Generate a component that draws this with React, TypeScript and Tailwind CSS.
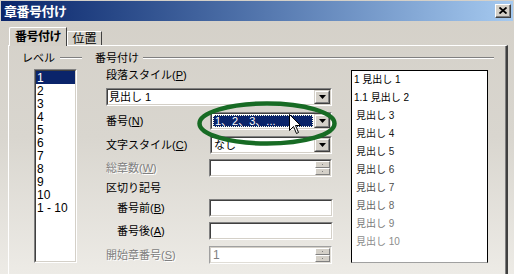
import React from "react";

function Sunken({
  children,
  className = "",
  light = false,
}: {
  children?: React.ReactNode;
  className?: string;
  light?: boolean;
}) {
  return (
    <div
      className={
        (light
          ? "border border-t-[#a0a0a0] border-l-[#a0a0a0] border-r-white border-b-white "
          : "border border-t-[#808080] border-l-[#808080] border-r-white border-b-white ") + className
      }
    >
      <div
        className={
          light
            ? "h-full flex items-stretch bg-white border border-t-[#d4d0c8] border-l-[#d4d0c8] border-r-[#e0ddd6] border-b-[#e0ddd6]"
            : "h-full flex items-stretch bg-white border border-t-[#404040] border-l-[#404040] border-r-[#d4d0c8] border-b-[#d4d0c8]"
        }
      >
        {children}
      </div>
    </div>
  );
}

function DropButton() {
  return (
    <div className="w-[16px] h-full shrink-0 border border-t-[#d4d0c8] border-l-[#d4d0c8] border-r-[#404040] border-b-[#404040]">
      <div className="w-full h-full bg-[#d4d0c8] border border-t-white border-l-white border-r-[#808080] border-b-[#808080] flex items-center justify-center">
        <svg width="7" height="4" viewBox="0 0 7 4">
          <path d="M0 0H7L3.5 4Z" fill="#000" />
        </svg>
      </div>
    </div>
  );
}

function SpinButtons() {
  return (
    <div className="w-[15px] h-full shrink-0 flex flex-col">
      <div className="flex-1 bg-[#d4d0c8] border border-t-white border-l-white border-r-[#808080] border-b-[#808080] flex items-center justify-center">
        <div className="w-[1px] h-[1px] bg-[#808080]" />
      </div>
      <div className="flex-1 bg-[#d4d0c8] border border-t-white border-l-white border-r-[#808080] border-b-[#808080] flex items-center justify-center">
        <div className="w-[1px] h-[1px] bg-[#808080]" />
      </div>
    </div>
  );
}

const disabledText = "text-[#808080] [text-shadow:1px_1px_0_#ffffff]";

export default function App() {
  const levels = ["1", "2", "3", "4", "5", "6", "7", "8", "9", "10", "1 - 10"];
  const preview = [
    { t: "1 見出し 1", c: "text-black", p: "pl-[2px]" },
    { t: "1.1 見出し 2", c: "text-black", p: "pl-[2px]" },
    { t: "見出し 3", c: "text-[#111111]", p: "pl-[4px]" },
    { t: "見出し 4", c: "text-[#1a1a1a]", p: "pl-[4px]" },
    { t: "見出し 5", c: "text-[#222222]", p: "pl-[4px]" },
    { t: "見出し 6", c: "text-[#333333]", p: "pl-[4px]" },
    { t: "見出し 7", c: "text-[#4a4a4a]", p: "pl-[4px]" },
    { t: "見出し 8", c: "text-[#666666]", p: "pl-[4px]" },
    { t: "見出し 9", c: "text-[#7c7c7c]", p: "pl-[4px]" },
    { t: "見出し 10", c: "text-[#8c8c8c]", p: "pl-[4px]" },
  ];

  return (
    <div className="relative w-[514px] h-[274px] overflow-hidden bg-linear-to-b from-[#d4d0c8] via-[#d9d6cf] to-[#edebe6] font-['Liberation_Sans','Noto_Sans_CJK_JP',sans-serif] text-[11px] text-black leading-none">
      {/* Title bar */}
      <div className="mt-[1px] mx-[1px] h-[20px] flex items-center justify-between bg-linear-to-r from-[#0a246a] to-[#a6caf0] pl-[3px] pr-[2px]">
        <span className="text-white font-bold text-[13px] tracking-[-0.5px]">章番号付け</span>
        <div className="w-[16px] h-[14px] border border-t-white border-l-white border-r-[#404040] border-b-[#404040]">
          <div className="w-full h-full bg-[#d4d0c8] border-r border-b border-[#808080] flex items-center justify-center">
            <svg width="8" height="7" viewBox="0 0 8 7">
              <path d="M0.5 0.5L7.5 6.5M7.5 0.5L0.5 6.5" stroke="#000" strokeWidth="1.8" />
            </svg>
          </div>
        </div>
      </div>

      {/* Body */}
      <div className="flex flex-col pl-[8px] pr-[6px] pt-[6px] h-[253px]">
        {/* Tabs */}
        <div className="flex items-start h-[18px] ml-[1px]">
          <div className="relative z-10 h-[19px] w-[58px] bg-[#d4d0c8] border-t border-l border-white border-r border-r-[#404040] rounded-tl-[2px] flex items-center justify-center">
            <span className="font-bold text-[12px] tracking-[-0.5px]">番号付け</span>
          </div>
          <div className="mt-[4px] h-[14px] w-[35px] border-t border-l border-white border-r border-r-[#404040] flex items-center justify-center">
            <span className="text-[12px]">位置</span>
          </div>
        </div>

        {/* Panel */}
        <div className="flex-1 border-t border-l border-white border-r-2 border-r-[#404040]">
          <div className="h-full border-r border-r-[#808080] pt-[5px] pl-[13px] flex">
            {/* Level fieldset */}
            <div className="w-[60px] flex flex-col">
              <div className="flex items-center h-[14px]">
                <span>レベル</span>
                <div className="flex-1 ml-[5px] border-t border-t-[#808080] border-b border-b-white" />
              </div>
              <div className="mt-[4px] ml-[12px] w-[43px] h-[194px] border border-t-[#808080] border-l-[#808080] border-r-white border-b-white">
                <div className="h-full bg-white border border-t-[#404040] border-l-[#404040] border-r-[#d4d0c8] border-b-[#d4d0c8] flex flex-col text-[12px]">
                  {levels.map((l, i) => (
                    <div
                      key={l}
                      className={
                        i === 0
                          ? "h-[13px] flex items-center pl-[1px] bg-[#0a246a] text-white"
                          : "h-[13px] flex items-center pl-[1px]"
                      }
                    >
                      {l}
                    </div>
                  ))}
                </div>
              </div>
            </div>

            {/* Numbering fieldset */}
            <div className="ml-[13px] w-[399px] flex flex-col">
              <div className="flex items-center h-[14px]">
                <span>番号付け</span>
                <div className="flex-1 ml-[4px] border-t border-t-[#808080] border-b border-b-white" />
              </div>
              <div className="flex">
                {/* Form column */}
                <div className="ml-[11px] w-[227px] flex flex-col">
                  <div className="mt-[3px] h-[14px] flex items-center">
                    段落スタイル(<span className="underline">P</span>)
                  </div>
                  <Sunken className="mt-[6px] h-[18px] w-[226px]">
                    <div className="flex-1 flex items-center pl-[1px]">見出し 1</div>
                    <DropButton />
                  </Sunken>
                  <div className="mt-[6px] h-[18px] flex items-center">
                    <span>
                      番号(<span className="underline">N</span>)
                    </span>
                    <Sunken className="ml-auto mr-[1px] h-[18px] w-[122px]">
                      <div className="flex-1 p-[1px] flex">
                        <div className="flex-1 bg-[#0a246a] text-white flex items-center pl-[1px] border border-dotted border-[#ffffe0]">
                          1、2、3、...
                        </div>
                      </div>
                      <DropButton />
                    </Sunken>
                  </div>
                  <div className="mt-[6px] h-[18px] flex items-center">
                    <span>
                      文字スタイル(<span className="underline">C</span>)
                    </span>
                    <Sunken className="ml-auto mr-[1px] h-[18px] w-[122px]">
                      <div className="flex-1 flex items-center pl-[2px]">なし</div>
                      <DropButton />
                    </Sunken>
                  </div>
                  <div className="mt-[5px] h-[18px] flex items-center">
                    <span className={disabledText}>
                      総章数(<span className="underline">W</span>)
                    </span>
                    <Sunken className="ml-auto mr-[1px] h-[18px] w-[123px]">
                      <div className="flex-1" />
                      <SpinButtons />
                    </Sunken>
                  </div>
                  <div className="mt-[4px] h-[14px] flex items-center">区切り記号</div>
                  <div className="mt-[4px] h-[18px] flex items-center">
                    <span className="pl-[11px]">
                      番号前(<span className="underline">B</span>)
                    </span>
                    <Sunken className="ml-auto h-[18px] w-[124px]">
                      <div className="flex-1" />
                    </Sunken>
                  </div>
                  <div className="mt-[5px] h-[18px] flex items-center">
                    <span className="pl-[11px]">
                      番号後(<span className="underline">A</span>)
                    </span>
                    <Sunken className="ml-auto h-[18px] w-[124px]">
                      <div className="flex-1" />
                    </Sunken>
                  </div>
                  <div className="mt-[6px] h-[18px] flex items-center">
                    <span className={disabledText}>
                      開始章番号(<span className="underline">S</span>)
                    </span>
                    <Sunken light className="ml-auto mr-[1px] h-[18px] w-[123px]">
                      <div className="flex-1 flex items-center pl-[2px] text-[12px] text-[#808080]">1</div>
                      <SpinButtons />
                    </Sunken>
                  </div>
                </div>

                {/* Preview */}
                <div className="ml-[18px] mt-[5px] w-[137px] h-[193px] bg-white border-t border-l border-r border-black border-b border-b-[#a0a0a0] flex flex-col text-[10px]">
                  {preview.map((p) => (
                    <div key={p.t} className={"h-[18px] flex items-center " + p.c + " " + p.p}>
                      {p.t}
                    </div>
                  ))}
                </div>
              </div>
            </div>
          </div>
        </div>
      </div>

      {/* Annotation ellipse */}
      <svg className="absolute left-0 top-0 pointer-events-none" width="514" height="274" viewBox="0 0 514 274">
        <ellipse cx="267" cy="123.5" rx="67.5" ry="20" fill="none" stroke="#176b24" strokeWidth="4.5" />
      </svg>

      {/* Mouse cursor */}
      <svg className="absolute left-[289px] top-[114px] pointer-events-none" width="13" height="21" viewBox="0 0 13 21">
        <path d="M0.5 0.5V16.5L4.5 12.5L7.5 19.5L9.5 18.5L6.5 11.5H11.5Z" fill="#fff" stroke="#000" strokeWidth="1" />
      </svg>
    </div>
  );
}
